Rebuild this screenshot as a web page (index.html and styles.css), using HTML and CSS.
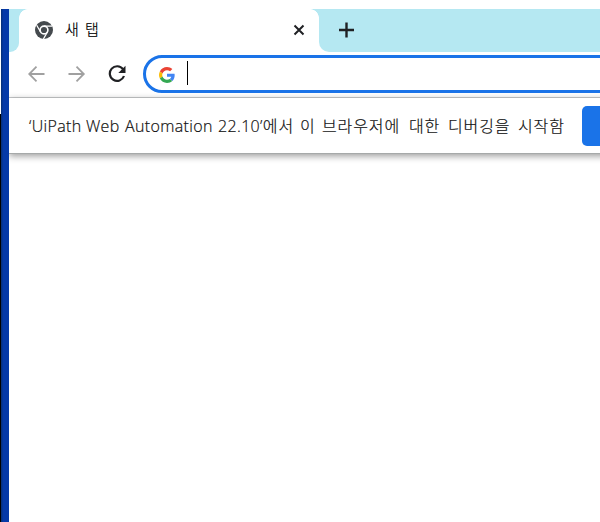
FILE: index.html
```html
<!DOCTYPE html>
<html lang="ko">
<head>
<meta charset="utf-8">
<title>새 탭</title>
<link rel="stylesheet" href="styles.css">
</head>
<body>
<div class="desktop">
  <div class="edge"></div>
  <div class="frame"></div>
  <main class="browser">
    <header class="tabs">
      <div class="strip-start"></div>
      <div class="tab">
        <svg class="chrome" viewBox="0 0 18 18"><circle cx="9" cy="9" r="9" fill="#454a4e"/><circle cx="9" cy="9" r="3.9" fill="none" stroke="#fff" stroke-width="1.6"/><path d="M9 5.1H17M12.4 11L8.4 18M5.6 11L1.7 4.2" stroke="#fff" stroke-width="1.3"/></svg>
        <span class="title">새 탭</span>
        <svg class="close" viewBox="0 0 12 12"><path d="M1.5 1.5l9 9M10.5 1.5l-9 9" stroke="#202124" stroke-width="2"/></svg>
      </div>
      <div class="strip-end"><svg class="plus" viewBox="0 0 16 16"><path d="M7.500 .5v15M0 8h15" stroke="#202124" stroke-width="2.4"/></svg></div>
    </header>
    <nav class="toolbar">
      <svg class="arrow" viewBox="0 0 18 18"><path d="M16.500 9H1.500M8.500 1.700L1.200 9L8.500 16.300" fill="none" stroke="#a0a0a0" stroke-width="1.8"/></svg>
      <svg class="arrow" viewBox="0 0 18 18"><path d="M.500 9h15M8.500 1.700L15.800 9L8.500 16.300" fill="none" stroke="#a0a0a0" stroke-width="1.8"/></svg>
      <svg class="reload" viewBox="0 0 18 18"><path d="M15 4.2A7.3 7.3 0 1 0 16 11" fill="none" stroke="#202124" stroke-width="2.2"/><path d="M17.500 .8V8h-7.200z" fill="#202124"/></svg>
      <div class="address">
        <svg class="google" viewBox="0 0 48 48"><path fill="#ea4335" d="M24 9.500c3.500 0 6.700 1.200 9.200 3.600l6.900-6.900C35.900 2.400 30.500 0 24 0 14.600 0 6.500 5.400 2.600 13.200l8 6.200C12.400 13.700 17.700 9.500 24 9.500z"/><path fill="#4285f4" d="M47 24.600c0-1.600-.2-3.100-.4-4.600H24v9h12.900c-.6 3-2.200 5.500-4.700 7.200l7.700 6C44.400 38 47 32 47 24.600z"/><path fill="#fbbc05" d="M10.500 28.600c-.5-1.500-.8-3-.8-4.600s.3-3.100.8-4.600l-8-6.200C.9 16.500 0 20.100 0 24s.9 7.500 2.600 10.800z"/><path fill="#34a853" d="M24 48c6.500 0 11.900-2.100 15.900-5.800l-7.700-6c-2.100 1.500-4.900 2.300-8.200 2.300-6.300 0-11.600-4.200-13.500-9.900l-7.900 6.200C6.500 42.600 14.600 48 24 48z"/></svg>
        <span class="caret"></span>
      </div>
    </nav>
    <section class="infobar">
      <p class="message"><span class="w1 latin">‘UiPath</span> <span class="w2 latin">Web</span> <span class="w3 latin">Automation</span> <span class="w4"><span class="latin version">22.10’</span><span class="ko">에서</span></span> <span class="w5 ko">이</span> <span class="w6 ko">브라우저에</span> <span class="w7 ko">대한</span> <span class="w8 ko">디버깅을</span> <span class="w9 ko">시작함</span></p>
      <div class="action"></div>
    </section>
    <section class="page"></section>
  </main>
</div>
</body>
</html>
```
FILE: styles.css
```css
* { box-sizing: border-box; }
body { margin: 0; background: #fff; overflow: hidden; color: #202124; font-family: "Noto Sans", "Noto Sans CJK KR", sans-serif; }
svg { display: block; flex: none; }
.desktop { display: flex; height: 522px; padding-top: 9px; }
.edge { width: 1px; background: linear-gradient(#fff 105px, #000 105px); }
.frame { width: 8px; background: linear-gradient(90deg, #063180 0, #063180 1px, #0539a8 2px); }
.browser { width: 591px; overflow: hidden; }
.tabs { display: flex; height: 43px; }
.strip-start { width: 10px; background: #b5e8f2; border-bottom-right-radius: 9px; }
.tab { width: 300px; display: flex; align-items: center; padding: 0 14px 1px 16px; background: #fff; position: relative; }
.tab::before, .tab::after { content: ""; position: absolute; top: 0; width: 9px; height: 9px; }
.tab::before { left: 0; background: radial-gradient(circle at 100% 100%, #fff 8.5px, #b5e8f2 9.2px); }
.tab::after { right: 0; background: radial-gradient(circle at 0 100%, #fff 8.5px, #b5e8f2 9.2px); }
.chrome { width: 18px; height: 18px; }
.title { margin-left: 12px; font: 300 15px/22px "Noto Sans CJK KR", sans-serif; word-spacing: 2px; flex: 1; position: relative; top: -1px; color: #000; -webkit-text-stroke: .2px #000; }
.close { width: 12px; height: 12px; }
.strip-end { flex: 1; background: #b5e8f2; border-bottom-left-radius: 10px; padding: 13px 0 0 20px; }
.plus { width: 16px; height: 16px; }
.toolbar { height: 46px; display: flex; align-items: center; padding: 0 0 1px 19px; border-bottom: 1px solid #c9cbcd; }
.arrow { width: 18px; height: 18px; margin-right: 22px; }
.reload { width: 18px; height: 18px; margin-right: 17px; }
.address { flex: none; width: 480px; height: 38px; border: 3px solid #1a73e8; border-radius: 19px; display: flex; align-items: center; padding: 2px 0 0 13px; }
.google { width: 16px; height: 16px; }
.caret { width: 1px; height: 24px; background: #000; margin: 0 0 4px 12px; }
.infobar { width: 620px; height: 56px; display: flex; align-items: center; padding-left: 20px; border-bottom: 1px solid #a6a9a9; box-shadow: 0 2px 7px #0006; }
.message { display: flex; flex: none; width: 553px; margin: 0; font-size: 16px; line-height: 22px; white-space: nowrap; color: #111; -webkit-text-stroke: .2px #111; }
.message > span { flex: none; }
.latin { font-family: "Open Sans", "Noto Sans", sans-serif; font-weight: 300; letter-spacing: .35px; position: relative; top: 1px; }
.version { top: 0; }
.ko { font-family: "Noto Sans CJK KR", sans-serif; font-weight: 300; letter-spacing: .9px; }
.w1 { width: 57px; }
.w2 { width: 39px; }
.w3 { width: 93px; }
.w4 { width: 82px; }
.w5 { width: 22px; }
.w6 { width: 87px; }
.w7 { width: 39px; }
.w8 { width: 70px; }
.w9 { width: 50px; }
.action { flex: none; width: 60px; height: 40px; background: #1a73e8; border-radius: 5px; }
.page { height: 368px; }
```
